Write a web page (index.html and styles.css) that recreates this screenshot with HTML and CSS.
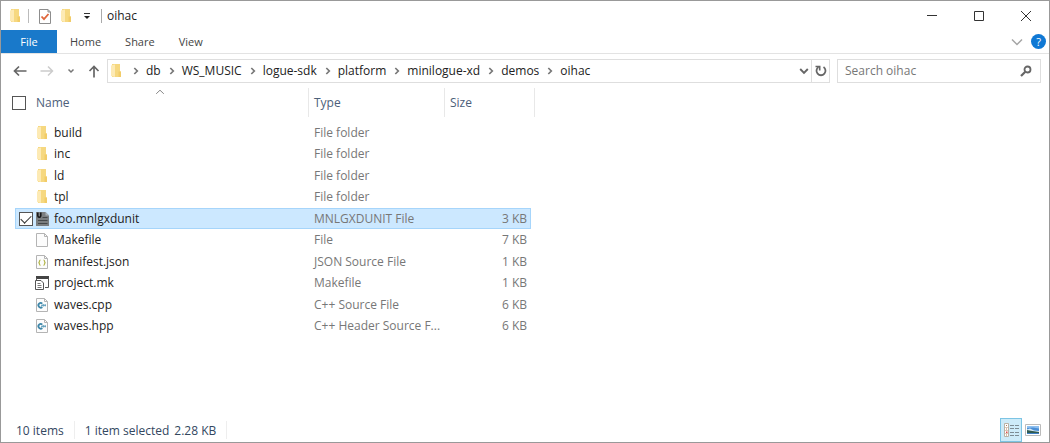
FILE: index.html
```
<!DOCTYPE html>
<html lang="en">
<head>
<meta charset="utf-8">
<title>oihac</title>
<link rel="stylesheet" href="styles.css">
</head>
<body>
<svg width="0" height="0" class="defs" aria-hidden="true">
  <symbol id="folder" viewBox="0 0 16 16">
    <path d="M3 1h8v7.500h1v5.500H3z" fill="#f6d880"/>
    <path d="M2 2.500l4-1v12.500L2 13z" fill="#fdeab4"/>
    <path d="M9.500 8.500h2.500v5.500h-2.500z" fill="#f2cc68"/>
  </symbol>
  <symbol id="page" viewBox="0 0 16 16">
    <path d="M1.500 1.500h8l3 3v10h-11z" fill="#fcfcfc" stroke="#b4b4b4"/>
    <path d="M9.500 1.500v3h3" fill="none" stroke="#b4b4b4"/>
  </symbol>
  <symbol id="chev" viewBox="0 0 8 8">
    <path d="M2.300 1l3 3-3 3" fill="none" stroke="#777" stroke-width="1.700"/>
  </symbol>
  <symbol id="cpp" viewBox="0 0 16 16">
    <use href="#page"/>
    <path d="M7.300 6.600a2.300 2.300 0 1 0 0 3.400" fill="none" stroke="#3d86a8" stroke-width="1.800"/>
    <path d="M6 8.300h5M8.200 7v2.600M10.200 7.200v2.200" stroke="#5b9cb9"/>
  </symbol>
</svg>
<div class="window">
  <header class="titlebar">
    <svg class="icon" viewBox="0 0 16 16"><use href="#folder"/></svg>
    <span class="bar bar-first"></span>
    <button class="plain quick" aria-label="Properties"><svg class="icon" viewBox="0 0 16 16"><path d="M2.500 1.500h8.500l2.500 2.500v11.500h-11z" fill="#fff" stroke="#8d8d8d"/><path d="M11 1.500v2.500h2.500" fill="none" stroke="#8d8d8d"/><path d="M4.500 8.500l2.500 2.700 4.500-5.200" fill="none" stroke="#e0673c" stroke-width="1.800"/></svg></button>
    <button class="plain quick" aria-label="New folder"><svg class="icon" viewBox="0 0 16 16"><use href="#folder"/></svg></button>
    <button class="plain quick-menu" aria-label="Customize toolbar"><svg width="8" height="8" viewBox="0 0 8 8"><path d="M1 1.500h6" stroke="#333"/><path d="M1 4h6L4 7z" fill="#222"/></svg></button>
    <span class="bar bar-dark"></span>
    <h1 class="title">oihac</h1>
    <div class="controls">
      <button class="plain control" aria-label="Minimize"><svg width="12" height="12" viewBox="0 0 12 12"><path d="M1 5.500h10" stroke="#333"/></svg></button>
      <button class="plain control" aria-label="Maximize"><svg width="12" height="12" viewBox="0 0 12 12"><path d="M1.500 1.500h9v9h-9z" fill="none" stroke="#333"/></svg></button>
      <button class="plain control" aria-label="Close"><svg width="12" height="12" viewBox="0 0 12 12"><path d="M1 1l10 10M11 1L1 11" stroke="#333"/></svg></button>
    </div>
  </header>
  <nav class="tabs" aria-label="Ribbon">
    <button class="plain tab file">File</button>
    <button class="plain tab">Home</button>
    <button class="plain tab">Share</button>
    <button class="plain tab">View</button>
    <div class="tabs-end">
      <button class="plain" aria-label="Expand ribbon"><svg width="12" height="12" viewBox="0 0 12 12"><path d="M1 3.500l5 5 5-5" fill="none" stroke="#a5a5a5" stroke-width="1.500"/></svg></button>
      <button class="plain help" aria-label="Help">?</button>
    </div>
  </nav>
  <div class="navbar">
    <div class="arrows">
      <button class="plain" aria-label="Back"><svg width="14" height="12" viewBox="0 0 14 12"><path d="M13.500 6H1.500M6 1.500L1.500 6 6 10.500" fill="none" stroke="#666" stroke-width="1.700"/></svg></button>
      <button class="plain" aria-label="Forward"><svg width="14" height="12" viewBox="0 0 14 12"><path d="M.5 6h12M8 1.500L12.500 6 8 10.500" fill="none" stroke="#ccc" stroke-width="1.500"/></svg></button>
      <button class="plain" aria-label="Recent locations"><svg width="8" height="8" viewBox="0 0 8 8"><path d="M1.500 2.500L4 5l2.500-2.500" fill="none" stroke="#777" stroke-width="1.500"/></svg></button>
      <button class="plain" aria-label="Up"><svg width="12" height="13" viewBox="0 0 12 13"><path d="M6 12.500v-11M1.500 6L6 1.500 10.500 6" fill="none" stroke="#666" stroke-width="1.700"/></svg></button>
    </div>
    <div class="address">
      <svg class="icon" viewBox="0 0 16 16"><use href="#folder"/></svg>
      <svg class="chev"><use href="#chev"/></svg><button class="plain">db</button>
      <svg class="chev"><use href="#chev"/></svg><button class="plain">WS_MUSIC</button>
      <svg class="chev"><use href="#chev"/></svg><button class="plain">logue-sdk</button>
      <svg class="chev"><use href="#chev"/></svg><button class="plain">platform</button>
      <svg class="chev"><use href="#chev"/></svg><button class="plain">minilogue-xd</button>
      <svg class="chev"><use href="#chev"/></svg><button class="plain">demos</button>
      <svg class="chev"><use href="#chev"/></svg><button class="plain">oihac</button>
      <button class="plain previous" aria-label="Previous locations"><svg width="10" height="10" viewBox="0 0 10 10"><path d="M1.200 3L5 6.800 8.800 3" fill="none" stroke="#666" stroke-width="1.900"/></svg></button>
      <button class="plain refresh" aria-label="Refresh"><svg width="12" height="12" viewBox="0 0 12 12"><path d="M8.500 2A4.500 4.500 0 1 1 3.500 2" fill="none" stroke="#666" stroke-width="1.800"/><path d="M.5 1.500h4.200v4" fill="none" stroke="#666" stroke-width="1.600"/></svg></button>
    </div>
    <div class="search">
      <input class="search-input" type="text" aria-label="Search oihac" placeholder="Search oihac">
      <svg width="12" height="12" viewBox="0 0 12 12"><circle cx="7.500" cy="4.500" r="3" fill="none" stroke="#666" stroke-width="1.800"/><path d="M5.300 6.700L1 11" stroke="#666" stroke-width="2.200"/></svg>
    </div>
  </div>
  <main class="content">
    <table class="files">
      <colgroup><col class="col-check"><col class="col-name"><col class="col-type"><col class="col-size"></colgroup>
      <thead>
        <tr>
          <th><input class="check" type="checkbox" aria-label="Select all"></th>
          <th class="name-head">Name<svg class="sort" width="10" height="6" viewBox="0 0 10 6"><path d="M1.200 4.800L5 1.200l3.800 3.600" fill="none" stroke="#888"/></svg></th>
          <th>Type</th>
          <th>Size</th>
        </tr>
      </thead>
      <tbody>
        <tr><td></td><td><span class="name"><svg class="icon"><use href="#folder"/></svg>build</span></td><td>File folder</td><td></td></tr>
        <tr><td></td><td><span class="name"><svg class="icon"><use href="#folder"/></svg>inc</span></td><td>File folder</td><td></td></tr>
        <tr><td></td><td><span class="name"><svg class="icon"><use href="#folder"/></svg>ld</span></td><td>File folder</td><td></td></tr>
        <tr><td></td><td><span class="name"><svg class="icon"><use href="#folder"/></svg>tpl</span></td><td>File folder</td><td></td></tr>
        <tr class="selected"><td><input class="check" type="checkbox" aria-label="Select foo.mnlgxdunit" checked></td><td><span class="name"><svg class="icon" viewBox="0 0 16 16"><path d="M1 1h9.500l3.500 3.500V15H1z" fill="#7b7e80"/><path d="M10.500 1v3.500H14z" fill="#a9b1b7"/><path d="M2.800 1.500v3.200q0 1.500 1.500 1.500t1.500-1.500V1.500" fill="none" stroke="#151515" stroke-width="1.500"/><path d="M7.500 6.500h5M3 9.500h9.500M3 12.500h9.500" stroke="#45484a"/></svg>foo.mnlgxdunit</span></td><td>MNLGXDUNIT File</td><td>3 KB</td></tr>
        <tr><td></td><td><span class="name"><svg class="icon"><use href="#page"/></svg>Makefile</span></td><td>File</td><td>7 KB</td></tr>
        <tr><td></td><td><span class="name"><svg class="icon" viewBox="0 0 16 16"><use href="#page"/><path d="M5.500 6q-1 0-1 1.200T3.500 8.700q1 .2 1 1.400t1 1.200M8.500 6q1 0 1 1.200t1 1.500q-1 .2-1 1.400t-1 1.200" fill="none" stroke="#b4b74c" stroke-width="1.200"/></svg>manifest.json</span></td><td>JSON Source File</td><td>1 KB</td></tr>
        <tr><td></td><td><span class="name"><svg class="icon" viewBox="0 0 16 16"><path d="M1 1h13v3H1z" fill="#444"/><path d="M13.500 3v9.500H10M1.500 3v2" fill="none" stroke="#555"/><path d="M.5 5.500h5.500l2.500 2.500v6.500h-8z" fill="#fff" stroke="#555"/><path d="M2.500 8.500h3M2.500 10.500h4M2.500 12.500h4" stroke="#777"/></svg>project.mk</span></td><td>Makefile</td><td>1 KB</td></tr>
        <tr><td></td><td><span class="name"><svg class="icon"><use href="#cpp"/></svg>waves.cpp</span></td><td>C++ Source File</td><td>6 KB</td></tr>
        <tr><td></td><td><span class="name"><svg class="icon"><use href="#cpp"/></svg>waves.hpp</span></td><td>C++ Header Source F...</td><td>6 KB</td></tr>
      </tbody>
    </table>
  </main>
  <footer class="status">
    <span class="status-part">10 items</span>
    <span class="status-part"><span>1 item selected</span><span>2.28 KB</span></span>
    <div class="views">
      <button class="plain view active" aria-label="Details view"><svg width="16" height="16" viewBox="0 0 16 16"><path d="M1.500 1.500h4v13h-4z" fill="#fff" stroke="#b9b2a6"/><path d="M2 5.500h3M2 8.500h3M2 11.500h3" stroke="#d8c8b8"/><path d="M3 3h1v1H3zM3 6.500h1v1H3zM3 12.500h1v1H3z" fill="#b07a50"/><path d="M3 9.500h1.500v1.500H3z" fill="#e04a4a"/><path d="M7 3.500h4M12 3.500h4M7 6.500h4M12 6.500h4M7 10.500h4M12 10.500h4M7 13.500h4M12 13.500h4" stroke="#7d8c93"/></svg></button>
      <button class="plain view" aria-label="Large icons view"><svg width="16" height="12" viewBox="0 0 16 12"><path d="M.5.5h15v11H.5z" fill="#fff" stroke="#bbb"/><path d="M2 2h12v8H2z" fill="#4b8fd6"/><path d="M2 2h12v2.500L8 3.500 2 4z" fill="#8fc0f0"/><path d="M2 5.500l3-1 4 2 5 .5v1H2z" fill="#dcebf5"/><path d="M2 6l4 .8L14 8v1H2z" fill="#2f5b52"/><path d="M2 9h12v1H2z" fill="#3f7fc4"/></svg></button>
    </div>
  </footer>
</div>
</body>
</html>
```
FILE: styles.css
```
* { box-sizing: border-box; }

body {
  margin: 0;
  background: #fff;
  color: #222;
  font: 12px/16px "Open Sans", "Noto Sans", sans-serif;
}

.defs { position: absolute; }
svg { display: block; flex: none; }

.plain {
  padding: 0;
  border: 0;
  background: none;
  color: inherit;
  font: inherit;
}

.icon { width: 16px; height: 16px; }

.window {
  display: flex;
  flex-direction: column;
  min-height: 100vh;
  border: 1px solid #999;
}

/* Title bar */
.titlebar {
  display: flex;
  align-items: center;
  height: 29px;
  padding-left: 7px;
}

.bar { width: 1px; height: 14px; background: #bbb; }
.bar-first { margin: 0 8px 0 4px; }
.bar-dark { margin-right: 5px; background: #aaa; }
.quick { margin-right: 6px; }
.quick-menu { margin: 0 10px 0 2px; }
.title { margin: 0; font-size: 12px; font-weight: 400; }
.controls { display: flex; margin-left: auto; }
.control { display: grid; place-items: center; width: 47px; height: 29px; }

/* Ribbon tabs */
.tabs {
  display: flex;
  height: 24px;
  border-bottom: 1px solid #e3e3e3;
  color: #444;
  font-size: 11px;
}

.tab { padding: 0 12px; }
.file { width: 56px; margin-right: 1px; padding: 0; background: #1979ca; color: #fff; }
.tabs-end { display: flex; align-items: center; gap: 8px; margin-left: auto; padding-right: 3px; }

.help {
  width: 15px;
  height: 15px;
  border-radius: 50%;
  background: #0f78d4;
  color: #fff;
  line-height: 15px;
}

/* Navigation */
.navbar {
  display: flex;
  align-items: center;
  height: 34px;
  padding-right: 8px;
}

.arrows {
  display: flex;
  align-items: center;
  justify-content: space-between;
  width: 106px;
  padding: 0 7px 0 12px;
}

.address {
  display: flex;
  flex: 1;
  align-items: center;
  height: 24px;
  padding-left: 1px;
  border: 1px solid #dedede;
}

.chev { width: 8px; height: 8px; margin: 0 6px 0 7px; }
.previous { margin: 0 2px 0 auto; }

.refresh {
  display: grid;
  place-items: center;
  width: 18px;
  height: 22px;
  border-left: 1px solid #dedede;
}

.search {
  display: flex;
  align-items: center;
  width: 204px;
  height: 24px;
  margin-left: 7px;
  padding: 0 8px 0 7px;
  border: 1px solid #dedede;
}

.search-input {
  flex: 1;
  min-width: 0;
  padding: 0;
  border: 0;
  outline: 0;
  background: none;
  font: inherit;
}

.search-input::placeholder { color: #777; opacity: 1; }

/* File list */
.content { flex: 1; padding-left: 11px; }

.files {
  width: 523px;
  border-spacing: 0;
  table-layout: fixed;
}

.col-check { width: 23px; }
.col-name { width: 274px; }
.col-type { width: 136px; }
.col-size { width: 90px; }

.files th {
  height: 29px;
  padding: 0 0 0 5px;
  border-right: 1px solid #e8e8e8;
  color: #4c607a;
  font-weight: 400;
  text-align: left;
}

.files th:first-child { padding: 0; border: 0; }
.files .name-head { position: relative; padding-left: 1px; }
.sort { position: absolute; top: 1px; left: 120px; }
.files tbody::before { content: ""; display: block; height: 5px; }

.files td {
  height: 21px;
  padding: 0 0 0 5px;
  color: #777;
  white-space: nowrap;
}

.files tr:nth-child(even) td { height: 22px; }
.files td:first-child { padding: 0 0 0 4px; border-left: 3px solid transparent; }
.files td:nth-child(2) { padding: 0; color: #222; }
.files td:last-child { padding: 0 4px 0 0; border-right: 4px solid transparent; text-align: right; }

.name { display: flex; align-items: center; gap: 3px; }

.selected td {
  background: #cce8ff padding-box;
  box-shadow: inset 0 1px #a6d5fb, inset 0 -1px #a6d5fb;
}

.selected td:first-child { box-shadow: inset 0 1px #a6d5fb, inset 0 -1px #a6d5fb, inset 1px 0 #a6d5fb; }
.selected td:last-child { box-shadow: inset 0 1px #a6d5fb, inset 0 -1px #a6d5fb, inset -1px 0 #a6d5fb; }

.check {
  display: block;
  width: 14px;
  height: 14px;
  margin: 0;
  border: 1px solid #555;
  background: #fff;
  appearance: none;
}

.check:checked::before {
  content: "";
  display: block;
  width: 9px;
  height: 5px;
  margin: 2px 0 0 1px;
  border: solid #333;
  border-width: 0 0 1px 1px;
  transform: rotate(-45deg);
}

/* Status bar */
.status {
  display: flex;
  align-items: center;
  height: 24px;
  padding-left: 15px;
  color: #33475f;
}

.status-part {
  display: flex;
  gap: 5px;
  margin-right: 10px;
  padding: 2px 10px 0 0;
  border-right: 1px solid #eee;
}

.views { display: flex; margin-left: auto; padding-right: 5px; }
.view { display: grid; place-items: center; width: 22px; height: 24px; }
.active { border: 1px solid #7cc4e4; background: #cdebf8; }
```
